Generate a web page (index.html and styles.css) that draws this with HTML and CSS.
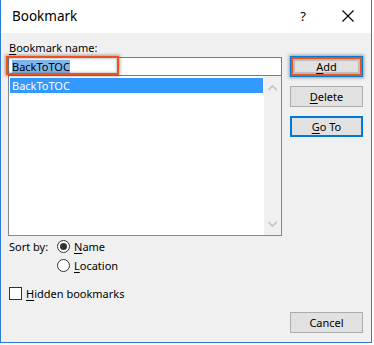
FILE: index.html
```html
<!DOCTYPE html>
<html>
<head>
<meta charset="utf-8">
<link rel="stylesheet" href="styles.css">
</head>
<body>
<div class="window">
  <div class="titlebar">
    <span class="title">Bookmark</span>
    <span class="help">?</span>
    <svg class="close" width="12" height="12" viewBox="0 0 12 12"><path d="M0.5 0.5 L11.5 11.5 M11.5 0.5 L0.5 11.5" stroke="#000" stroke-width="1.1" fill="none"/></svg>
  </div>
  <div class="body">
    <div class="left">
      <div class="label"><u>B</u>ookmark name:</div>
      <div class="input">
        <span class="sel">BackToTOC</span>
        <div class="annot-input"></div>
      </div>
      <div class="listbox">
        <div class="items">
          <div class="item selected">BackToTOC</div>
        </div>
        <div class="scroll">
          <svg width="9" height="6" viewBox="0 0 9 6"><path d="M0.5 5 L4.5 1 L8.5 5" stroke="#c2c2c2" stroke-width="1.6" fill="none"/></svg>
          <svg width="9" height="6" viewBox="0 0 9 6"><path d="M0.5 1 L4.5 5 L8.5 1" stroke="#c2c2c2" stroke-width="1.6" fill="none"/></svg>
        </div>
      </div>
      <div class="sort">
        <span class="sortlabel">Sort by:</span>
        <div class="radios">
          <div class="opt"><span class="radio checked"></span><span><u>N</u>ame</span></div>
          <div class="opt"><span class="radio"></span><span><u>L</u>ocation</span></div>
        </div>
      </div>
      <div class="opt check"><span class="checkbox"></span><span><u>H</u>idden bookmarks</span></div>
    </div>
    <div class="right">
      <div class="btn add"><span><u>A</u>dd</span></div>
      <div class="btn"><span><u>D</u>elete</span></div>
      <div class="btn default"><span><u>G</u>o To</span></div>
      <div class="spacer"></div>
      <div class="btn">Cancel</div>
    </div>
  </div>
</div>
</body>
</html>
```
FILE: styles.css
```css
html, body {
  margin: 0;
  padding: 0;
  background: #ffffff;
}
body {
  font-family: "Noto Sans", "Open Sans", sans-serif;
  font-size: 11px;
  color: #000;
}
u { text-decoration: underline; text-underline-offset: 2px; }
.window {
  width: 372px;
  height: 343px;
  box-sizing: border-box;
  border: 1px solid #2b7bd3;
  border-top: none;
  display: flex;
  flex-direction: column;
}
.titlebar {
  height: 33px;
  background: #fff;
  display: flex;
  align-items: center;
  padding-left: 11px;
  padding-right: 17px;
  flex-shrink: 0;
}
.title { font-size: 13.5px; flex: 1; margin-top: -2px; }
.help { font-size: 13px; margin-right: 36px; margin-top: -2px; }
.close { margin-top: -2px; }
.body {
  flex: 1;
  background: #f0f0f0;
  display: flex;
  padding: 0 7px 0 7px;
  gap: 8px;
}
.left {
  width: 274px;
  display: flex;
  flex-direction: column;
}
.label {
  margin-top: 7px;
  line-height: 16px;
  margin-left: 1px;
  margin-bottom: 1px;
}
.input {
  position: relative;
  height: 19px;
  box-sizing: border-box;
  border: 1px solid #7a7a7a;
  background: #fff;
  display: flex;
  align-items: center;
  padding-left: 3px;
}
.sel {
  background: #7fb5ea;
  line-height: 14px;
}
.annot-input {
  position: absolute;
  left: -3px;
  top: -2px;
  width: 113px;
  height: 19px;
  box-sizing: border-box;
  border: 2px solid #ea5220;
  box-shadow: 0 0 3px 1px rgba(60,60,60,0.45), inset 0 0 2px 1px rgba(80,80,80,0.3);
}
.listbox {
  height: 160px;
  box-sizing: border-box;
  border: 1px solid #828790;
  border-top: none;
  background: #fff;
  display: flex;
}
.items { flex: 1; padding: 2px 1px 0 1px; }
.item {
  height: 15px;
  line-height: 15px;
  padding-left: 2px;
}
.item.selected { background: #3399ff; color: #fff; }
.scroll {
  width: 17px;
  background: #f0f0f0;
  display: flex;
  flex-direction: column;
  justify-content: space-between;
  align-items: center;
  padding: 9px 0 8px 0;
}
.scroll svg { display: block; }
.sort {
  display: flex;
  margin-top: 3px;
  margin-left: 1px;
}
.sortlabel { width: 48px; line-height: 15px; }
.radios { display: flex; flex-direction: column; gap: 4px; }
.opt {
  display: flex;
  align-items: center;
  gap: 4px;
  line-height: 15px;
}
.radio {
  width: 13px;
  height: 13px;
  box-sizing: border-box;
  border: 1px solid #333;
  border-radius: 50%;
  background: #fff;
  display: flex;
  align-items: center;
  justify-content: center;
}
.radio.checked::after {
  content: "";
  width: 7px;
  height: 7px;
  border-radius: 50%;
  background: #333;
}
.check { margin-top: 13px; margin-left: 1px; }
.checkbox {
  width: 13px;
  height: 13px;
  box-sizing: border-box;
  border: 1px solid #333;
  background: #fff;
}
.right {
  width: 73px;
  display: flex;
  flex-direction: column;
  padding-top: 23px;
  padding-bottom: 9px;
  gap: 9px;
}
.spacer { flex: 1; }
.btn {
  height: 21px;
  box-sizing: border-box;
  border: 1px solid #adadad;
  background: #e1e1e1;
  display: flex;
  align-items: center;
  justify-content: center;
  line-height: 15px;
}
.btn.default { border: 2px solid #0078d7; }
.btn.add {
  border: 1px solid #0078d7;
  box-shadow: inset 0 0 0 2px #ea5220, inset 0 0 1px 4px rgba(120,120,120,0.35), 0 0 3px 1px rgba(60,60,60,0.45);
}
```
